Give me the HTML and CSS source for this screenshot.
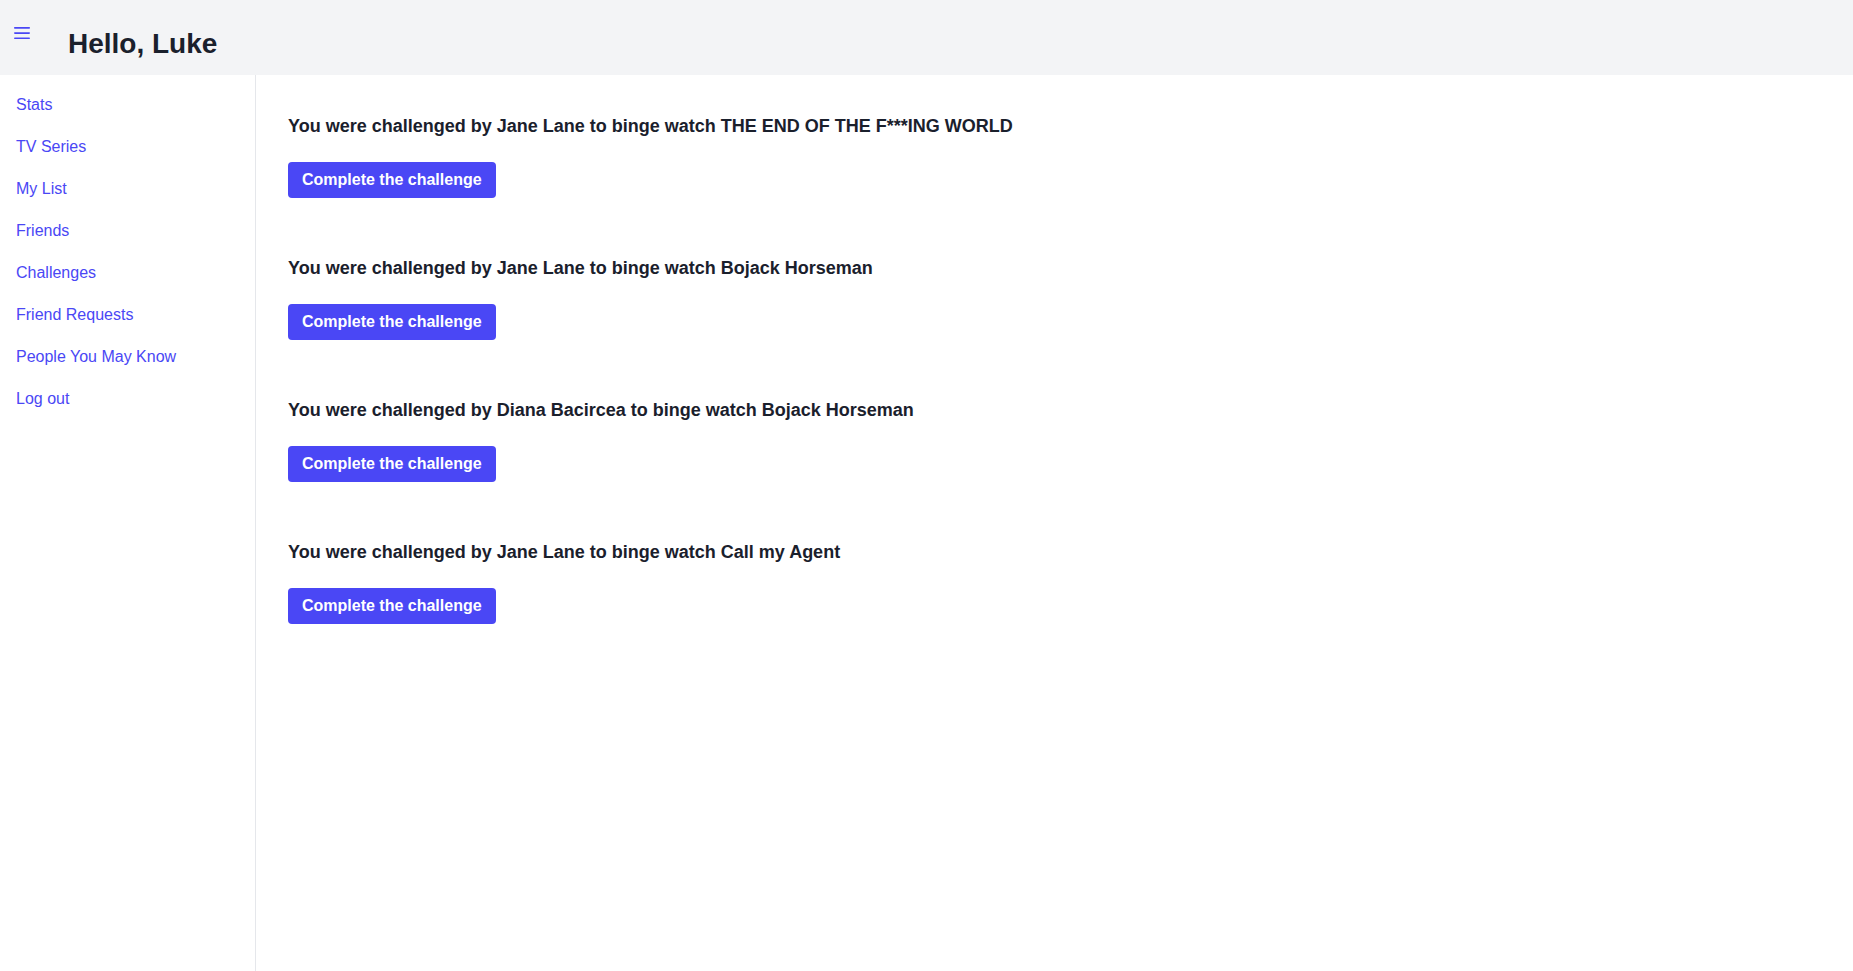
FILE: index.html
```html
<!DOCTYPE html>
<html lang="en">
<head>
<meta charset="utf-8">
<title>Challenges</title>
<link rel="stylesheet" href="styles.css">
</head>
<body>
<div class="app">
  <header class="topbar">
    <button class="menu-btn" aria-label="Menu">
      <svg width="16" height="14" viewBox="0 0 16 14" aria-hidden="true">
        <rect x="0" y="1" width="16" height="1.7" rx="0.8" fill="currentColor"/>
        <rect x="0" y="6.2" width="16" height="1.7" rx="0.8" fill="currentColor"/>
        <rect x="0" y="11.4" width="16" height="1.7" rx="0.8" fill="currentColor"/>
      </svg>
    </button>
    <h1 class="greeting">Hello, Luke</h1>
  </header>
  <div class="body">
    <nav class="sidebar">
      <a class="nav-link" href="#">Stats</a>
      <a class="nav-link" href="#">TV Series</a>
      <a class="nav-link" href="#">My List</a>
      <a class="nav-link" href="#">Friends</a>
      <a class="nav-link" href="#">Challenges</a>
      <a class="nav-link" href="#">Friend Requests</a>
      <a class="nav-link" href="#">People You May Know</a>
      <a class="nav-link" href="#">Log out</a>
    </nav>
    <main class="content">
      <section class="challenge">
        <h2 class="challenge-title">You were challenged by Jane Lane to binge watch THE END OF THE F***ING WORLD</h2>
        <button class="btn">Complete the challenge</button>
      </section>
      <section class="challenge">
        <h2 class="challenge-title">You were challenged by Jane Lane to binge watch Bojack Horseman</h2>
        <button class="btn">Complete the challenge</button>
      </section>
      <section class="challenge">
        <h2 class="challenge-title">You were challenged by Diana Bacircea to binge watch Bojack Horseman</h2>
        <button class="btn">Complete the challenge</button>
      </section>
      <section class="challenge">
        <h2 class="challenge-title">You were challenged by Jane Lane to binge watch Call my Agent</h2>
        <button class="btn">Complete the challenge</button>
      </section>
    </main>
  </div>
</div>
</body>
</html>
```

FILE: styles.css
```css
* { box-sizing: border-box; }

html, body {
  margin: 0;
  padding: 0;
  height: 100%;
}

body {
  font-family: "Liberation Sans", Arial, sans-serif;
  color: #1a202c;
  background: #ffffff;
}

.app {
  display: flex;
  flex-direction: column;
  min-height: 100vh;
}

.topbar {
  height: 75px;
  background: #f3f4f6;
  display: flex;
  align-items: flex-start;
  flex-shrink: 0;
}

.menu-btn {
  border: 0;
  background: none;
  padding: 0;
  margin: 26px 0 0 14px;
  color: #4a47f5;
  display: flex;
  cursor: pointer;
}

.greeting {
  margin: 26px 0 0 38px;
  font-size: 28px;
  line-height: 36px;
  font-weight: 700;
  color: #1a202c;
}

.body {
  flex: 1;
  display: flex;
}

.sidebar {
  width: 256px;
  flex-shrink: 0;
  border-right: 1px solid #e5e7eb;
  padding-top: 9px;
  display: flex;
  flex-direction: column;
}

.nav-link {
  display: block;
  padding: 9px 16px;
  font-size: 16px;
  line-height: 24px;
  color: #4a47f5;
  text-decoration: none;
}

.content {
  flex: 1;
  padding: 37px 32px 0 32px;
  display: flex;
  flex-direction: column;
  gap: 56px;
  align-items: flex-start;
}

.challenge {
  display: flex;
  flex-direction: column;
  align-items: flex-start;
  gap: 22px;
}

.challenge-title {
  margin: 0;
  font-size: 18px;
  line-height: 28px;
  font-weight: 700;
  color: #1a202c;
}

.btn {
  border: 0;
  border-radius: 4px;
  background: #4a47f5;
  color: #ffffff;
  font-family: "Liberation Sans", Arial, sans-serif;
  font-size: 16px;
  font-weight: 700;
  line-height: 24px;
  padding: 6px 14px;
  cursor: pointer;
}
```
